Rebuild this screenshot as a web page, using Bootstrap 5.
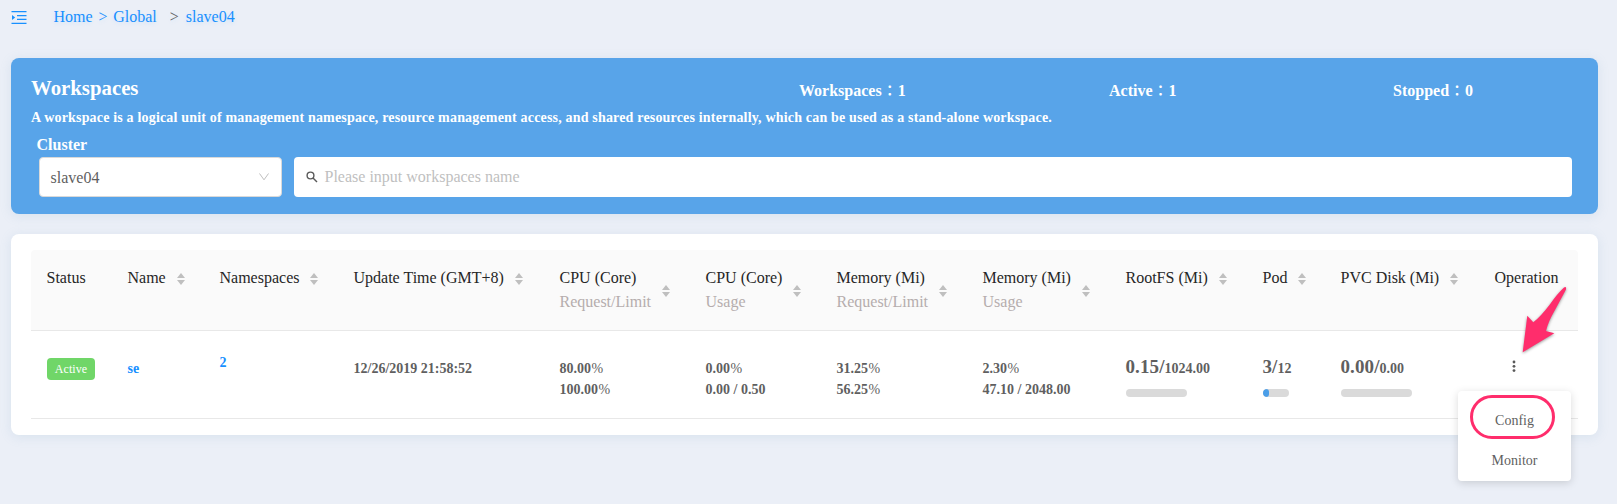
<!DOCTYPE html>
<html lang="en">
<head>
<meta charset="utf-8">
<title>Workspaces</title>
<meta name="viewport" content="width=device-width, initial-scale=1">
<link href="https://cdn.jsdelivr.net/npm/bootstrap@5.3.0/dist/css/bootstrap.min.css" rel="stylesheet">
<style>
  body { background: #ebeff7; font: 16px/24px "Liberation Serif", "Noto Sans CJK TC", serif; color: #5f5f5f; height: 504px; overflow: hidden; }
  a { color: #1890ff; text-decoration: none; }
  .topbar { height: 58px; padding: 5px 0 0 11px; text-shadow: 0 2px 4px rgba(24,144,255,.12); }
  .topbar svg { margin-top: 5px; }
  .crumbs { margin-left: 26.500px; word-spacing: 1.800px; }
  .crumbs span { margin: 0 7px 0 13px; }
  .panel { margin: 0 19px 0 11px; border-radius: 8px; box-shadow: 0 2px 12px rgba(120,160,190,.16); }
  .hero { height: 156px; background: #58a4e9; color: #fff; padding: 16px 26px 0 20px; font-weight: 700; }
  .hero h1 { font-size: 20.800px; line-height: 28px; font-weight: 700; width: 768px; }
  .stats { padding-top: 5px; }
  .colon { font-size: 15px; font-weight: 500; display: inline-block; width: 16px; text-align: center; line-height: 16px; }
  .desc { font-size: 14px; line-height: 20px; letter-spacing: .178px; padding-top: 5px; }
  .field-name { margin: 6px 0 0 5.500px; line-height: 22px; }
  .fields { margin: 1px 0 0 8px; gap: 12px; }
  .field { height: 40px; border-radius: 4px; background: #fff; font-weight: 400; }
  .cluster { width: 243px; border: 1px solid #d9d9d9; color: #5f5f5f; padding: 2px 11px 0 10.500px; }
  .search { color: #bfbfbf; }
  .search svg { margin: 0 6.500px 0 12px; }
  .list { height: 201px; margin-top: 20px; background: #fff; padding: 16px 20px; }
  .grid-table { table-layout: fixed; width: 1547px; border-collapse: separate; border-spacing: 0; }
  .grid-table th { background: #fafafa; height: 81px; padding: 16px 0 0 15.500px; font-weight: 400; color: #262626; vertical-align: top; border-bottom: 1px solid #e8e8e8; white-space: nowrap; }
  .grid-table th:first-child { border-top-left-radius: 4px; }
  .grid-table th:last-child { border-top-right-radius: 4px; }
  .grid-table td { height: 88px; padding: 27px 0 0 15.500px; font-size: 14px; line-height: 21px; font-weight: 700; color: #5f5f5f; vertical-align: top; border-bottom: 1px solid #e8e8e8; white-space: nowrap; }
  .grid-table td.raised { padding-top: 21px; }
  .grid-table td:first-child { padding-left: 16px; }
  .grid-table svg { fill: #bfbfbf; }
  .grid-table svg.dots { fill: #595959; margin: 1px 0 0 16.500px; }
  .sorter { margin: 7px 0 0 -.700px; }
  .align-items-center .sorter { margin-top: 1px; }
  .sub { color: #b5adad; }
  .state { background: #70d668; color: #fff; width: 48px; height: 22px; font-size: 12px; line-height: 22px; font-weight: 400; border-radius: 4px; letter-spacing: .1px; }
  .amount { height: 27px; margin-top: -1px; line-height: 21px; }
  .big { font-size: 19px; letter-spacing: .1px; line-height: 20px; }
  .meter { height: 8px; border-radius: 4px; background: #dadada; margin-top: 5px; overflow: hidden; }
  .meter div { height: 8px; border-radius: 4px; background: #4a9ee8; }
  .pct { font-weight: 400; margin-left: .500px; }
  .actions { position: absolute; left: 1458px; top: 391px; width: 113px; height: 90px; background: #fff; border-radius: 4px; box-shadow: 0 2px 8px rgba(0,0,0,.15); font-size: 14px; text-align: center; padding-top: 10px; }
  .actions div { line-height: 40px; }
  .ring { position: absolute; left: 1470px; top: 395px; width: 85px; height: 44px; border: 3px solid #ff2d6c; border-radius: 22px; }
  .pointer { position: absolute; left: 1515px; top: 280px; filter: drop-shadow(0 1px 1.5px rgba(0,0,0,.4)); }
</style>
</head>
<body>
<nav class="topbar d-flex align-items-start">
  <svg width="16" height="16" viewBox="0 0 16 16" fill="#1890ff"><path d="M.5 1h15v1.300H.5zM6 5h9.500v1.200H6zM6 8.800h9.500V10H6zM.5 12.800h15V14H.5zM1 5l3.200 2.500L1 10z"/></svg>
  <div class="crumbs"><a href="#">Home &gt; Global</a><span>&gt;</span><a href="#">slave04</a></div>
</nav>

<section class="panel hero">
  <div class="d-flex">
    <h1 class="mb-0">Workspaces</h1>
    <div class="stats d-flex flex-fill"><div style="width:310px">Workspaces<span class="colon">：</span>1</div><div style="width:284px">Active<span class="colon">：</span>1</div><div>Stopped<span class="colon">：</span>0</div></div>
  </div>
  <div class="desc">A workspace is a logical unit of management namespace, resource management access, and shared resources internally, which can be used as a stand-alone workspace.</div>
  <div class="field-name">Cluster</div>
  <div class="fields d-flex">
    <div class="field cluster d-flex align-items-center justify-content-between">slave04
      <svg width="12" height="12" viewBox="0 0 12 12" fill="none" stroke="#bfbfbf"><path d="M1.500 1.500 6 7.800l4.500-6.300"/></svg></div>
    <div class="field search d-flex align-items-center flex-fill"><svg width="12" height="12" viewBox="0 0 12 12" fill="none" stroke="#595959" stroke-width="1.4"><circle cx="4.500" cy="4.500" r="3.400"/><path d="M7 7l4 4"/></svg>Please input workspaces name</div>
  </div>
</section>

<section class="panel list">
<table class="grid-table">
  <colgroup><col style="width:81px"><col style="width:92px"><col style="width:134px"><col style="width:206px"><col style="width:146px"><col style="width:131px"><col style="width:146px"><col style="width:143px"><col style="width:137px"><col style="width:78px"><col style="width:154px"><col style="width:99px"></colgroup>
  <thead><tr id="heads"></tr></thead>
  <tbody><tr>
    <td><div class="state text-center">Active</div></td>
    <td><a href="#">se</a></td>
    <td class="raised"><a href="#">2</a></td>
    <td>12/26/2019 21:58:52</td>
    <td>80.00<span class="pct">%</span><br>100.00<span class="pct">%</span></td>
    <td>0.00<span class="pct">%</span><br>0.00 / 0.50</td>
    <td>31.25<span class="pct">%</span><br>56.25<span class="pct">%</span></td>
    <td>2.30<span class="pct">%</span><br>47.10 / 2048.00</td>
    <td><div class="amount"><span class="big">0.15/</span>1024.00</div><div class="meter" style="width:61px"></div></td>
    <td><div class="amount"><span class="big">3/</span>12</div><div class="meter" style="width:26px"><div style="width:25%"></div></div></td>
    <td><div class="amount"><span class="big">0.00/</span>0.00</div><div class="meter" style="width:71px"></div></td>
    <td><svg class="dots d-block" width="6" height="14" viewBox="0 0 6 14"><circle cx="3" cy="3" r="1.400"/><circle cx="3" cy="7.300" r="1.400"/><circle cx="3" cy="11.600" r="1.400"/></svg></td>
  </tr></tbody>
</table>
</section>

<div class="actions"><div>Config</div><div>Monitor</div></div>
<div class="ring"></div>
<svg class="pointer" width="60" height="80" viewBox="0 0 60 80"><path fill="#ff2d6c" d="M49 7.500Q42 14 35 24.300Q25 37.500 18.300 42.300L12.300 35.700L7.700 72.300L39.300 53.300L31 51Q33 42 40 30L51 9.500Q51.500 6 49 7.500Z"/></svg>

<script>
  // title, second line, sorter x offset from the cell's text start
  const heads = [["Status"],["Name","",49],["Namespaces","",90],["Update Time (GMT+8)","",161],
    ["CPU (Core)","Request/Limit",102],["CPU (Core)","Usage",87],["Memory (Mi)","Request/Limit",102],
    ["Memory (Mi)","Usage",99],["RootFS (Mi)","",93],["Pod","",35],["PVC Disk (Mi)","",109],["Operation"]];
  document.getElementById("heads").innerHTML = heads.map(([t, s, x]) =>
    `<th><div class="d-flex ${s ? "align-items-center" : "align-items-start"}"><div style="${x ? `width:${x}px` : ""}"><span>${t}</span>${s ? `<div class="sub">${s}</div>` : ""}</div>` +
    (x ? `<svg class="sorter" width="10" height="12" viewBox="0 0 10 12"><path d="M1 5 5 0l4 5zM1 7h8l-4 5z"/></svg>` : "") + `</div></th>`).join("");
</script>
<script src="https://cdn.jsdelivr.net/npm/bootstrap@5.3.0/dist/js/bootstrap.bundle.min.js"></script>
</body>
</html>
